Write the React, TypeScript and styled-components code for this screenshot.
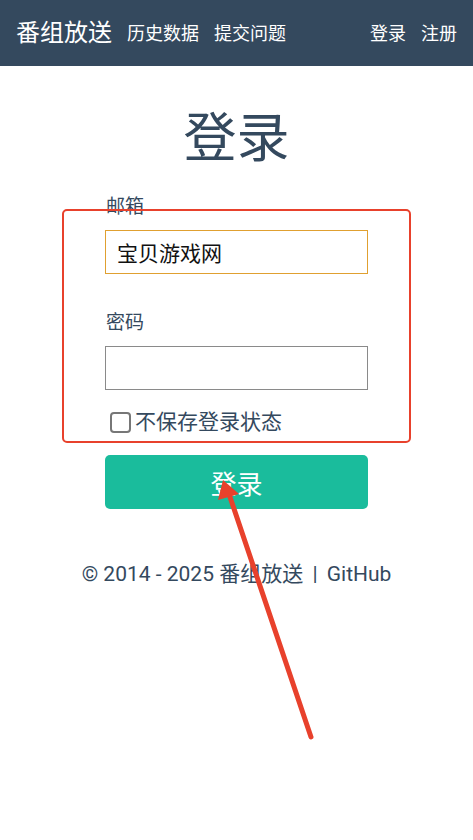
import React, { useState } from "react";
import styled, { createGlobalStyle } from "styled-components";

const colors = {
  navy: "#34495e",
  green: "#1abc9c",
  mark: "#e8412c",
  focus: "#e0a030",
  border: "#8a8a8a",
};

const GlobalStyle = createGlobalStyle`
  html, body {
    margin: 0;
    padding: 0;
    background: #fff;
  }
  body {
    font-family: Roboto, "Noto Sans CJK SC", sans-serif;
    color: ${colors.navy};
  }
  * {
    box-sizing: border-box;
  }
`;

const App: React.FC = () => {
  const [email, setEmail] = useState("宝贝游戏网");
  const [password, setPassword] = useState("");
  const [noRemember, setNoRemember] = useState(false);

  return (
    <Page>
      <GlobalStyle />
      <NavBar>
        <Brand>番组放送</Brand>
        <NavLink>历史数据</NavLink>
        <NavLink>提交问题</NavLink>
        <NavSpacer />
        <NavLink>登录</NavLink>
        <NavLink>注册</NavLink>
      </NavBar>

      <Main>
        <Title>登录</Title>
        <Form onSubmit={(e) => e.preventDefault()}>
          <Label>邮箱</Label>
          <Input
            $focused
            autoFocus
            value={email}
            onChange={(e) => setEmail(e.target.value)}
          />
          <Label $gap>密码</Label>
          <Input
            type="password"
            value={password}
            onChange={(e) => setPassword(e.target.value)}
          />
          <CheckRow>
            <CheckBox
              type="checkbox"
              checked={noRemember}
              onChange={(e) => setNoRemember(e.target.checked)}
            />
            <span>不保存登录状态</span>
          </CheckRow>
          <SubmitButton type="submit">登录</SubmitButton>
        </Form>
        <Footer>
          © 2014 - 2025 番组放送 <Sep>|</Sep> GitHub
        </Footer>
      </Main>

      {/* screenshot annotations */}
      <MarkBox />
      <ArrowLayer width="473" height="840" viewBox="0 0 473 840">
        <line
          x1="311"
          y1="737"
          x2="229"
          y2="494"
          stroke={colors.mark}
          strokeWidth="5"
          strokeLinecap="round"
        />
        <polygon points="223,480 218,500 239,494" fill={colors.mark} />
      </ArrowLayer>
    </Page>
  );
};

const Page = styled.div`
  position: relative;
  width: 473px;
  min-height: 840px;
  background: #fff;
`;

const NavBar = styled.nav`
  height: 66px;
  background: ${colors.navy};
  display: flex;
  align-items: center;
  padding: 0 16px;
  gap: 15px;
  color: #fff;
`;

const Brand = styled.span`
  font-size: 24px;
  line-height: 1;
`;

const NavLink = styled.span`
  font-size: 18px;
  line-height: 1;
  padding-top: 1px;
`;

const NavSpacer = styled.div`
  flex: 1;
`;

const Main = styled.main`
  width: 263px;
  margin: 0 auto;
  display: flex;
  flex-direction: column;
`;

const Title = styled.h1`
  margin: 42px 0 0;
  font-size: 53px;
  font-weight: 400;
  line-height: 62px;
  text-align: center;
  color: ${colors.navy};
`;

const Form = styled.form`
  display: flex;
  flex-direction: column;
  margin-top: 23px;
`;

const Label = styled.label<{ $gap?: boolean }>`
  font-size: 19px;
  line-height: 28px;
  margin: ${(p) => (p.$gap ? "35px" : "0")} 0 9px 1px;
  color: ${colors.navy};
`;

const Input = styled.input<{ $focused?: boolean }>`
  width: 263px;
  height: 44px;
  border: 1px solid ${(p) => (p.$focused ? colors.focus : colors.border)};
  border-radius: 0;
  padding: 0 11px;
  font-family: Roboto, "Noto Sans CJK SC", sans-serif;
  font-size: 21px;
  color: #111;
  caret-color: #111;
  outline: none;
  background: #fff;
`;

const CheckRow = styled.label`
  display: flex;
  align-items: center;
  gap: 4px;
  margin-top: 18px;
  padding-left: 5px;
  font-size: 21px;
  line-height: 28px;
  color: ${colors.navy};
`;

const CheckBox = styled.input`
  appearance: none;
  width: 21px;
  height: 21px;
  margin: 0;
  border: 2px solid #777;
  border-radius: 4px;
  background: #fff;
`;

const SubmitButton = styled.button`
  margin-top: 19px;
  height: 54px;
  border: none;
  border-radius: 5px;
  background: ${colors.green};
  color: #fff;
  font-family: Roboto, "Noto Sans CJK SC", sans-serif;
  font-size: 26px;
  cursor: pointer;
`;

const Footer = styled.footer`
  margin: 51px -60px 0;
  text-align: center;
  font-size: 21px;
  line-height: 28px;
  color: ${colors.navy};
  white-space: nowrap;
`;

const Sep = styled.span`
  margin: 0 4px;
`;

const MarkBox = styled.div`
  position: absolute;
  left: 62px;
  top: 209px;
  width: 349px;
  height: 234px;
  border: 2px solid ${colors.mark};
  border-radius: 5px;
  pointer-events: none;
`;

const ArrowLayer = styled.svg`
  position: absolute;
  left: 0;
  top: 0;
  pointer-events: none;
`;

export default App;
